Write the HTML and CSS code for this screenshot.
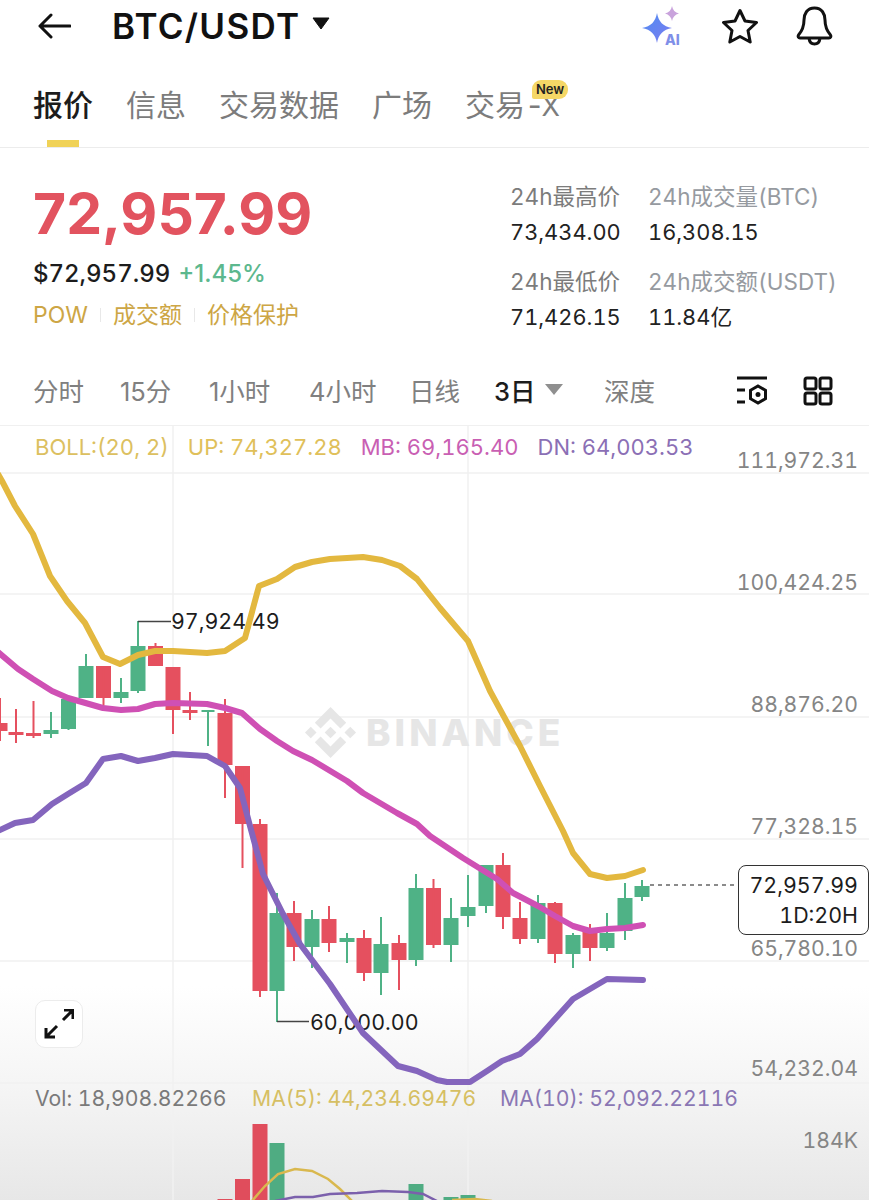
FILE: index.html
```html
<!DOCTYPE html>
<html lang="zh">
<head>
<meta charset="utf-8">
<meta content="width=device-width, initial-scale=1" name="viewport">
<title>BTC/USDT</title>
<link rel="stylesheet" href="styles.css">
</head>
<body>
<div class="page">

  <header class="topbar">
    <svg class="ico-back" width="34" height="26" viewBox="0 0 34 26"><path d="M33 13H3M14 2L3 13l11 11"/></svg>
    <span class="pair">BTC/USDT</span>
    <svg class="ico-caret" width="18" height="13" viewBox="0 0 18 13"><path d="M1 1h16l-8 11z"/></svg>
    <div class="top-icons">
      <svg class="ico-ai" width="42" height="48" viewBox="0 -3 42 48">
        <defs><linearGradient id="aiblue" x1="0" y1="0" x2="1" y2="1"><stop offset="0" stop-color="#4f8df2"/><stop offset="1" stop-color="#7d7cf0"/></linearGradient></defs>
        <path d="M15 8c1.500 8.500 6 13.500 15 15-9 1.500-13.500 6.500-15 15-1.500-8.500-6-13.500-15-15 9-1.500 13.500-6.500 15-15z" fill="url(#aiblue)"/>
        <path d="M30 1c.8 4 3 6.500 7 7.500-4 1-6.200 3.500-7 7.500-.8-4-3-6.500-7-7.500 4-1 6.200-3.500 7-7.500z" fill="#c9a3dc"/>
        <text class="ai-text" x="23" y="40">AI</text>
      </svg>
      <svg class="ico-line" width="38" height="36" viewBox="0 0 38 36"><path d="M19 2.500l5 10.500 11.500 1.500-8.500 8 2.200 11.500L19 28.500 8.800 34 11 22.500l-8.500-8L14 13z"/></svg>
      <svg class="ico-line" width="37" height="40" viewBox="0 0 37 40"><path d="M18.500 2C11 2 8 8 8 14c0 7-2 11-5.500 15-1 1.500 0 3 1.500 3h29c1.500 0 2.500-1.500 1.500-3C31 25 29 21 29 14c0-6-3-12-10.500-12zM13 32.500c.5 3.500 2.500 5.500 5.500 5.500s5-2 5.500-5.500"/></svg>
    </div>
  </header>

  <nav class="tabs">
    <a class="tab active">报价</a>
    <a class="tab">信息</a>
    <a class="tab">交易数据</a>
    <a class="tab">广场</a>
    <a class="tab">交易-<span class="tab-x">X</span><span class="badge-new">New</span></a>
  </nav>

  <section class="quote">
    <div class="quote-left">
      <div class="price">72,957.99</div>
      <div class="usd-row"><span class="usd">$72,957.99</span><span class="pct">+1.45%</span></div>
      <div class="tags"><span>POW</span><i></i><span>成交额</span><i></i><span>价格保护</span></div>
    </div>
    <div class="stats">
      <div class="stat"><div class="stat-label">24h最高价</div><div class="stat-value">73,434.00</div></div>
      <div class="stat"><div class="stat-label light">24h成交量(BTC)</div><div class="stat-value">16,308.15</div></div>
      <div class="stat"><div class="stat-label">24h最低价</div><div class="stat-value">71,426.15</div></div>
      <div class="stat"><div class="stat-label light">24h成交额(USDT)</div><div class="stat-value">11.84亿</div></div>
    </div>
  </section>

  <div class="periods">
    <span class="period p1">分时</span>
    <span class="period p2">15分</span>
    <span class="period p3">1小时</span>
    <span class="period p3">4小时</span>
    <span class="period p4">日线</span>
    <span class="period current">3日<svg width="18" height="11" viewBox="0 0 18 11"><path d="M0 0h18l-9 11z"/></svg></span>
    <span class="period depth">深度</span>
    <div class="period-icons">
      <svg class="ico-small" width="32" height="30" viewBox="0 0 32 30"><path d="M1 2h30M1 14h8M1 26h8"/><path d="M22 10l7.500 4.300v8.400L22 27l-7.500-4.300v-8.400z"/><circle class="dot" cx="22" cy="18.500" r="2.500"/></svg>
      <svg class="ico-small" width="30" height="30" viewBox="0 0 30 30"><rect x="2" y="2" width="11" height="11" rx="2"/><rect x="17" y="2" width="11" height="11" rx="2"/><rect x="2" y="17" width="11" height="11" rx="2"/><rect x="17" y="17" width="11" height="11" rx="2"/></svg>
    </div>
  </div>

  <section class="chart">
    <svg class="plot" width="869" height="775" viewBox="0 425 869 775">
      <!-- grid -->
      <path class="grid" d="M0 472H869M0 593H869M0 716H869M0 838H869M0 960H869M0 1082H869M173 425V1200M468 425V1200"/>

      <!-- watermark -->
      <g class="mark">
        <path transform="translate(305 706) scale(.403)" d="M38.730 53.200l24.590-24.580 24.600 24.600 14.300-14.310L63.320 0 24.420 38.900l14.310 14.300zM0 63.310l14.300-14.310 14.310 14.310-14.310 14.300zM38.730 73.410l24.590 24.590 24.600-24.600 14.310 14.290-38.900 38.910-38.910-38.880-.02-.02zM98 63.310l14.300-14.310 14.310 14.300-14.310 14.320zM77.830 63.300L63.320 48.780 52.590 59.510l-1.240 1.230-2.540 2.540 14.510 14.500 14.510-14.470z"/>
        <text class="mark-text" x="366" y="745">BINANCE</text>
      </g>

      <!-- price axis -->
      <g class="axis">
        <text x="858" y="467">111,972.31</text>
        <text x="858" y="589">100,424.25</text>
        <text x="858" y="711">88,876.20</text>
        <text x="858" y="833">77,328.15</text>
        <text x="858" y="955">65,780.10</text>
        <text x="858" y="1075">54,232.04</text>
        <text x="858" y="1147">184K</text>
      </g>

      <!-- candles -->
      <g class="down">
        <path d="M0 697V740M-6.500 723h13v6h-13z"/>
        <path d="M16 708V742M9.500 732h13v1h-13z"/>
        <path d="M33.500 700V737M27 733h13v1h-13z"/>
        <path d="M103.500 666V705M97 666h13v30h-13z"/>
        <path d="M155.500 642V664M149 646h13v18h-13z"/>
        <path d="M173 667V733M166.500 667h13v41h-13z"/>
        <path d="M190 691V719M183.500 710h13v1h-13z"/>
        <path d="M225 698V797M218.500 713h13v50h-13z"/>
        <path d="M242.500 766V867M236 766h13v56h-13z"/>
        <path d="M260 818V996M253.500 824h13v165h-13z"/>
        <path d="M294 900V960M287.500 913h13v32h-13z"/>
        <path d="M329 905V951M322.500 919h13v22h-13z"/>
        <path d="M364 929V980M357.500 938h13v33h-13z"/>
        <path d="M399 934V989M392.500 943h13v15h-13z"/>
        <path d="M433.500 878V947M427 888h13v55h-13z"/>
        <path d="M503 852V928M496.500 865h13v50h-13z"/>
        <path d="M520 901V943M513.500 918h13v19h-13z"/>
        <path d="M555 901V962M548.500 903h13v49h-13z"/>
        <path d="M590 923V960M583.500 931h13v15h-13z"/>
      </g>
      <g class="up">
        <path d="M51 711V737M44.500 730h13v2h-13z"/>
        <path d="M68.500 698V729M62 699h13v28h-13z"/>
        <path d="M86 653V697M79.500 666h13v30h-13z"/>
        <path d="M121 677V702M114.500 692h13v4h-13z"/>
        <path d="M138 620V692M131.500 646h13v43h-13z"/>
        <path d="M208 710V745M201.500 710h13v0h-13z"/>
        <path d="M277 892V1021M270.500 913h13v76h-13z"/>
        <path d="M312 909V967M305.500 919h13v26h-13z"/>
        <path d="M347 932V962M340.500 938h13v2h-13z"/>
        <path d="M381 916V994M374.500 944h13v27h-13z"/>
        <path d="M416 873V965M409.500 888h13v70h-13z"/>
        <path d="M451 897V961M444.500 918h13v25h-13z"/>
        <path d="M468 874V926M461.500 907h13v7h-13z"/>
        <path d="M486 864V912M479.500 865h13v39h-13z"/>
        <path d="M538 894V942M531.500 903h13v34h-13z"/>
        <path d="M573 932V967M566.500 935h13v17h-13z"/>
        <path d="M607 912V950M600.500 933h13v13h-13z"/>
        <path d="M625 882V939M618.500 898h13v31h-13z"/>
        <path d="M642 879V900M635.500 886h13v9h-13z"/>
      </g>

      <!-- high / low marks -->
      <path class="leader" d="M138 620.500H171M277 1020.500H309"/>
      <text class="extreme" x="171" y="628">97,924.49</text>
      <text class="extreme" x="310" y="1029">60,000.00</text>

      <!-- volume -->
      <g class="bar-down">
        <rect x="217.500" y="1198" width="15" height="2"/>
        <rect x="235" y="1178" width="15" height="22"/>
        <rect x="252.500" y="1123" width="15" height="77"/>
      </g>
      <g class="bar-up">
        <rect x="269.500" y="1142" width="15" height="58"/>
        <rect x="408.500" y="1183" width="15" height="17"/>
        <rect x="443.500" y="1196" width="15" height="4"/>
        <rect x="460.500" y="1194" width="15" height="6"/>
      </g>
      <polyline class="ma-gold" points="252,1200 265,1185 278,1173 295,1168 312,1170 328,1178 340,1188 352,1200"/>
      <polyline class="ma-gold" points="452,1199 475,1198 492,1200"/>
      <polyline class="ma-purple" points="275,1200 295,1196 313,1196 330,1193 357,1192 382,1190 408,1191 423,1193 437,1200"/>

      <!-- volume legend -->
      <text class="vol-label" x="35" y="1105">Vol: 18,908.82266</text>
      <text class="vol-ma5" x="252" y="1105">MA(5): 44,234.69476</text>
      <text class="vol-ma10" x="500" y="1105">MA(10): 52,092.22116</text>

      <!-- boll -->
      <polyline class="boll-up" points="-2,473 2,480 15,505 33,533 50,575 67,600 85,622 103,656 120,663 138,654 155,650 173,650 207,652 225,650 245,637 259,585 277,578 295,566 312,561 330,558 347,557 363,556 382,559 400,565 417,578 440,607 468,640 490,690 520,745 540,785 563,830 573,852 590,873 607,877 625,875 643,869"/>
      <polyline class="boll-mid" points="-2,651 18,668 33,678 52,690 68,697 103,707 121,709 138,708 155,703 173,702 207,703 225,707 242,712 260,728 277,740 293,750 312,759 347,780 363,792 397,812 417,823 430,835 463,857 497,878 513,892 538,905 555,915 573,925 590,930 607,928 625,927 643,924"/>
      <polyline class="boll-low" points="-2,830 15,822 33,819 52,803 68,793 86,782 103,758 121,755 138,760 155,757 173,753 207,755 225,765 240,787 250,825 263,873 283,913 300,943 330,983 363,1032 398,1065 417,1070 437,1079 447,1081 470,1081 487,1070 502,1060 520,1053 537,1038 555,1018 573,998 607,978 643,979"/>

      <!-- last price -->
      <path class="last-line" d="M650 884H738"/>
    </svg>

    <div class="boll-legend">
      <span class="c-boll">BOLL:(20, 2)</span>
      <span class="c-up">UP: 74,327.28</span>
      <span class="c-mb">MB: 69,165.40</span>
      <span class="c-dn">DN: 64,003.53</span>
    </div>

    <div class="last-tag">72,957.99<br>1D:20H</div>

    <div class="expand">
      <svg width="30" height="30" viewBox="0 0 30 30"><path d="M2 28L13 17M2 19v9h9M19 11L29 1M20 1h9v9"/></svg>
    </div>
  </section>

</div>
</body>
</html>
```

FILE: styles.css
```css
html, body {
  margin: 0;
  padding: 0;
  background: #fff;
}
.page {
  width: 869px;
  height: 1200px;
  overflow: hidden;
  font-family: Inter, "Noto Sans CJK SC", sans-serif;
  font-variant-numeric: tabular-nums;
  color: #1e2026;
}

/* top bar */
.topbar {
  display: flex;
  align-items: center;
  height: 52px;
  padding-left: 37px;
}
.ico-back path, .ico-line path {
  fill: none;
  stroke: #111;
  stroke-width: 3;
  stroke-linejoin: round;
  stroke-linecap: round;
}
.pair {
  margin-left: 41px;
  font-size: 35px;
  font-weight: 600;
  letter-spacing: 1.300px;
  color: #111;
}
.ico-caret {
  margin: 0 0 6px 12px;
}
.ico-caret path {
  fill: #111;
  stroke: #111;
  stroke-width: 1;
  stroke-linejoin: round;
}
.top-icons {
  display: flex;
  align-items: center;
  margin-left: auto;
  margin-right: 36px;
  gap: 37px;
}
.ico-ai .ai-text {
  font-size: 14px;
  font-weight: 800;
  fill: #7f8fe8;
}

/* tabs */
.tabs {
  display: flex;
  gap: 33px;
  height: 95px;
  padding-left: 33px;
  border-bottom: 1px solid #ececec;
  box-sizing: border-box;
  margin-top: 1px;
}
.tab {
  position: relative;
  padding-top: 32px;
  height: 40px;
  line-height: 40px;
  font-size: 30px;
  color: #7c7c7c;
}
.tab.active {
  color: #1c1c1c;
  font-weight: 500;
}
.tab.active::after {
  content: "";
  position: absolute;
  left: 14px;
  bottom: -22px;
  width: 32px;
  height: 7px;
  background: #f0d257;
}
.tab-x {
  margin-left: -3px;
  font-size: 27px;
}
.badge-new {
  position: absolute;
  left: 67px;
  top: 27px;
  padding: 0 4px;
  height: 19px;
  line-height: 18px;
  font-size: 13px;
  font-weight: 600;
  color: #222;
  background: #f5d766;
  border-radius: 9px 9px 9px 2px;
}

/* quote */
.quote {
  display: flex;
  height: 219px;
  padding-left: 33px;
  box-sizing: border-box;
}
.price {
  margin-top: 35px;
  font-size: 57px;
  line-height: 62px;
  font-weight: 700;
  font-variant-numeric: normal;
  color: #e2535f;
}
.usd-row {
  margin-top: 14px;
  line-height: 30px;
  font-size: 24px;
  white-space: nowrap;
}
.usd {
  font-weight: 500;
  color: #1c1c1c;
}
.pct {
  margin-left: 8px;
  color: #5cb88e;
  font-weight: 500;
  font-variant-numeric: normal;
}
.tags {
  display: flex;
  align-items: center;
  margin-top: 11px;
  line-height: 30px;
  font-size: 23px;
  color: #cda645;
}
.tags i {
  width: 1px;
  height: 14px;
  margin: 0 12px;
  background: #e8e8e8;
}
.stats {
  display: grid;
  grid-template-columns: 138px 1fr;
  grid-auto-rows: 68px;
  row-gap: 17px;
  width: 359px;
  margin-left: auto;
  padding-top: 32px;
}
.stat-label {
  height: 34px;
  line-height: 34px;
  font-size: 22.500px;
  color: #7c7c7c;
  white-space: nowrap;
}
.stat-label.light {
  color: #969aa0;
}
.stat-value {
  height: 34px;
  padding-top: 1px;
  line-height: 34px;
  font-size: 21.800px;
  color: #222;
  white-space: nowrap;
}

/* period row */
.periods {
  display: flex;
  align-items: center;
  height: 44px;
  padding: 0 0 14px 33px;
  border-bottom: 1px solid #f0f0f0;
  font-size: 25.500px;
  font-variant-numeric: normal;
  color: #808080;
}
.period {
  white-space: nowrap;
}
.p1 { width: 87px; }
.p2 { width: 89px; }
.p3 { width: 100px; }
.p4 { width: 85px; }
.current {
  display: flex;
  align-items: center;
  width: 110px;
  color: #1c1c1c;
  font-weight: 500;
}
.current svg {
  margin-left: 9px;
}
.current path {
  fill: #8f8f8f;
}
.period-icons {
  display: flex;
  align-items: center;
  gap: 35px;
  margin: 4px 0 0 81px;
}
.ico-small path, .ico-small rect {
  fill: none;
  stroke: #111;
  stroke-width: 3;
}
.ico-small .dot {
  fill: #111;
}

/* chart */
.chart {
  position: relative;
  height: 775px;
  background: linear-gradient(#fff 0, #fff 560px, #f5f5f5 660px, #e7e7e7 775px);
}
.plot {
  display: block;
}
.plot text {
  font-family: Inter, "Noto Sans CJK SC", sans-serif;
}
.grid {
  fill: none;
  stroke: #f1f1f1;
  stroke-width: 1.5;
}
.mark path {
  fill: #e6e6e6;
}
.mark-text {
  font-size: 37px;
  font-weight: 800;
  fill: #e6e6e6;
  letter-spacing: 4px;
}
.axis text {
  font-size: 21.200px;
  text-anchor: end;
  fill: #858585;
}
.down path, .up path {
  stroke-width: 2;
}
.down path {
  stroke: #e5505f;
  fill: #e5505f;
}
.up path {
  stroke: #4fb286;
  fill: #4fb286;
}
.bar-down rect {
  fill: #e04d5c;
}
.bar-up rect {
  fill: #4fac82;
}
.leader {
  fill: none;
  stroke: #444;
  stroke-width: 1.5;
}
.extreme {
  font-size: 21.400px;
  fill: #1c1c1c;
}
.ma-gold, .ma-purple {
  fill: none;
  stroke-width: 2.500;
}
.ma-gold {
  stroke: #d9b84e;
}
.ma-purple {
  stroke: #7b60ac;
}
.vol-label, .vol-ma5, .vol-ma10 {
  font-size: 21.200px;
}
.vol-label { fill: #7a7a7a; }
.vol-ma5 { fill: #d6bf63; }
.vol-ma10 { fill: #8a77b4; }
.boll-up, .boll-mid, .boll-low {
  fill: none;
  stroke-width: 6;
  stroke-linejoin: round;
  stroke-linecap: round;
}
.boll-up { stroke: #e3b83f; }
.boll-mid { stroke: #cf50b4; }
.boll-low { stroke: #8465bd; }
.last-line {
  stroke: #666;
  stroke-width: 1.5;
  stroke-dasharray: 4 4;
}
.boll-legend {
  position: absolute;
  left: 35px;
  top: 6px;
  display: flex;
  gap: 19px;
  line-height: 30px;
  font-size: 22px;
}
.c-boll { color: #dcc060; }
.c-up { color: #e0c05a; }
.c-mb { color: #c95fb3; }
.c-dn { color: #8b6fb5; }
.last-tag {
  position: absolute;
  left: 738px;
  top: 439px;
  box-sizing: border-box;
  width: 131px;
  height: 70px;
  padding: 4px 10px 0 0;
  border: 1.5px solid #333;
  border-radius: 8px;
  background: #fff;
  text-align: right;
  line-height: 30px;
  font-size: 21.400px;
  color: #1c1c1c;
}
.expand {
  position: absolute;
  left: 35px;
  top: 574px;
  display: flex;
  align-items: center;
  justify-content: center;
  box-sizing: border-box;
  width: 48px;
  height: 48px;
  border: 1.5px solid #ececec;
  border-radius: 10px;
  background: #fff;
}
.expand path {
  fill: none;
  stroke: #111;
  stroke-width: 3;
}
```
